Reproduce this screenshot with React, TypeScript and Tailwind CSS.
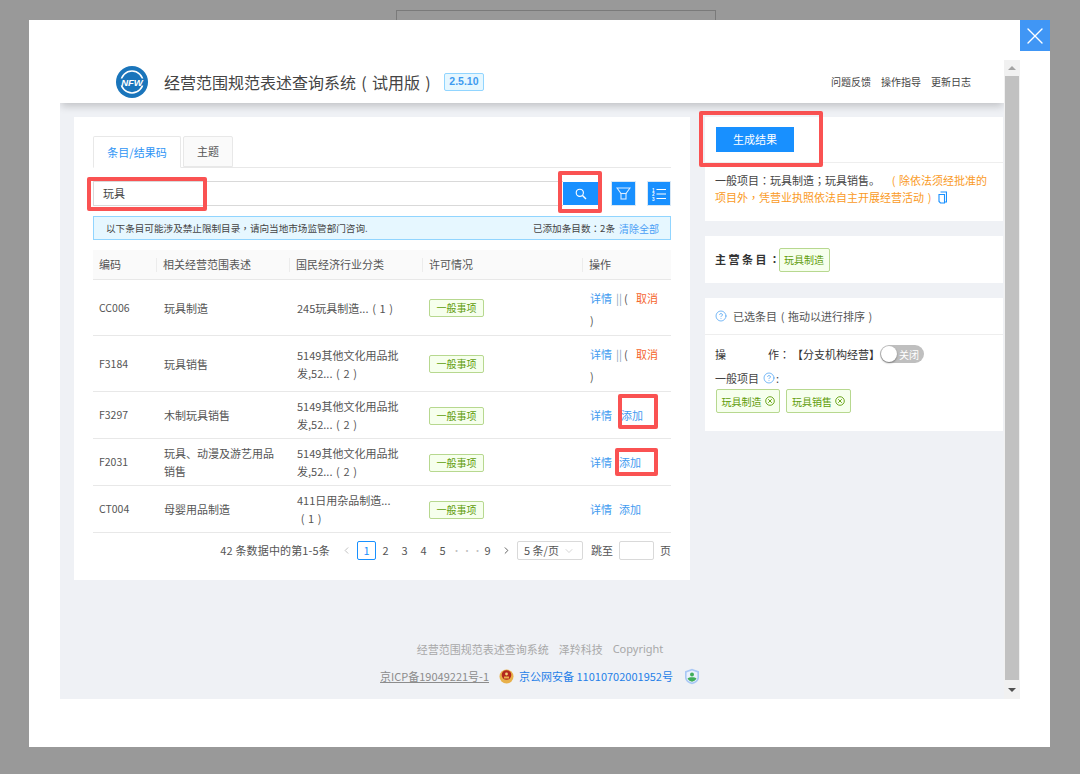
import React from "react";
import { X, CircleHelp, ChevronLeft, ChevronRight, ChevronDown } from "lucide-react";

const FONT = '"Noto Sans CJK SC", "Noto Sans", sans-serif';

/* Full-width punctuation sits centred in its cell in the reference. */
function T({ s }: { s: string }) {
  return (
    <>
      {s.split(/([（）：；，])/).map((part, i) => {
        if (part === "（") return <span key={i} className="px-[0.33em]">(</span>;
        if (part === "）") return <span key={i} className="px-[0.33em]">)</span>;
        if (/^[：；，]$/.test(part)) return <span key={i} className="[font-family:'Noto_Sans_CJK_TC',sans-serif]">{part}</span>;
        return <React.Fragment key={i}>{part}</React.Fragment>;
      })}
    </>
  );
}

type Row = { code: string; name: string[]; cls: string[]; h: string; added: boolean; addGap: string };
const rows: Row[] = [
  { code: "CC006", name: ["玩具制造"], cls: ["245玩具制造...（1）"], h: "h-[56px]", added: true, addGap: "" },
  { code: "F3184", name: ["玩具销售"], cls: ["5149其他文化用品批", "发,52...（2）"], h: "h-[56px]", added: true, addGap: "" },
  { code: "F3297", name: ["木制玩具销售"], cls: ["5149其他文化用品批", "发,52...（2）"], h: "h-[47px]", added: false, addGap: "gap-[9px]" },
  { code: "F2031", name: ["玩具、动漫及游艺用品", "销售"], cls: ["5149其他文化用品批", "发,52...（2）"], h: "h-[47px]", added: false, addGap: "gap-[7px]" },
  { code: "CT004", name: ["母婴用品制造"], cls: ["411日用杂品制造...", "（1）"], h: "h-[47px]", added: false, addGap: "gap-[7px]" },
];

function Tag({ children }: { children: React.ReactNode }) {
  return (
    <span className="inline-flex items-center justify-center h-[18px] w-[55px] border border-[#b7d88f] bg-[#f6ffed] text-[#5f9c0a] text-[10px] rounded-[2px]">
      {children}
    </span>
  );
}

function BoxTag({ children, w }: { children: React.ReactNode; w: string }) {
  return (
    <span className={`inline-flex items-center justify-center gap-[3px] h-[24px] ${w} border border-[#b7d88f] bg-[#f6ffed] text-[#5f9c0a] text-[10px] rounded-[2px]`}>
      {children}
    </span>
  );
}

function Logo() {
  return (
    <svg width="32" height="32" viewBox="0 0 32 32">
      <circle cx="16" cy="16" r="16" fill="#1a75bb" />
      <circle cx="16" cy="16" r="11" fill="#1a75bb" stroke="#ffffff" strokeWidth="1.6" />
      <rect x="3" y="12.5" width="26" height="7" fill="#1a75bb" />
      <text x="16" y="19.500" textAnchor="middle" fontSize="9.500" fontWeight="700" fontStyle="italic" fill="#ffffff" fontFamily="Liberation Sans, sans-serif">NFW</text>
    </svg>
  );
}

function SearchGlyph() {
  return (
    <svg width="12" height="12" viewBox="0 0 12 12" fill="none" stroke="#ffffff" strokeWidth="1.1">
      <circle cx="4.800" cy="4.800" r="3.600" />
      <path d="M7.500 7.500L11 11" strokeWidth="1.400" />
    </svg>
  );
}

function Funnel() {
  return (
    <svg width="15" height="13" viewBox="0 0 15 13" fill="none" stroke="#dcecff" strokeWidth="1.1">
      <path d="M1 1h13l-4 5.500H5z" />
      <rect x="5" y="6.500" width="5" height="5.500" />
    </svg>
  );
}

function ListGlyph() {
  return (
    <svg width="14" height="14" viewBox="0 0 14 14" fill="#ffffff" stroke="none">
      <text x="0" y="4.500" fontSize="4.500" fontWeight="700" fontFamily="Liberation Sans, sans-serif">1</text>
      <text x="0" y="9" fontSize="4.500" fontWeight="700" fontFamily="Liberation Sans, sans-serif">2</text>
      <text x="0" y="13.500" fontSize="4.500" fontWeight="700" fontFamily="Liberation Sans, sans-serif">3</text>
      <rect x="4.500" y="2" width="9.500" height="1" />
      <rect x="4.500" y="6.500" width="9.500" height="1" />
      <rect x="4.500" y="11" width="9.500" height="1" />
    </svg>
  );
}

function CircledX() {
  return (
    <svg width="10" height="10" viewBox="0 0 10 10" fill="none" stroke="currentColor" strokeWidth="0.9">
      <circle cx="5" cy="5" r="4.300" />
      <path d="M3.200 3.200L6.800 6.800M6.800 3.200L3.200 6.800" />
    </svg>
  );
}

function CopyIcon() {
  return (
    <svg width="9" height="13" viewBox="0 0 9 13" fill="none" stroke="#1890ff" strokeWidth="1.1" className="inline align-[-2px] ml-[3px]">
      <path d="M2.500 1H8.500V11H6.500" />
      <path d="M1 3.500H6.500V12H2.500L1 10.500z" />
    </svg>
  );
}

function PoliceBadge() {
  return (
    <svg width="15" height="16" viewBox="0 0 15 16">
      <ellipse cx="7.500" cy="8.500" rx="7" ry="7" fill="#e8b04a" />
      <circle cx="7.500" cy="7" r="4.800" fill="#b3261e" />
      <path d="M5 8.500h5v2H5z" fill="#e8b04a" />
      <circle cx="7.500" cy="6" r="1.400" fill="#f3d27a" />
    </svg>
  );
}

function ShieldIcon() {
  return (
    <svg width="16" height="17" viewBox="0 0 16 17">
      <path d="M8 .8l7 2.400v6c0 3.600-3 6-7 7-4-1-7-3.400-7-7v-6z" fill="#a9c8f5" />
      <path d="M8 2.600l5.400 1.800v4.800c0 2.700-2.300 4.600-5.400 5.400-3.100-.8-5.400-2.700-5.400-5.400V4.400z" fill="#e9f1fc" />
      <circle cx="8" cy="6.500" r="2" fill="#3fae5a" />
      <path d="M3.500 10.500c1.500-1.800 7.500-1.800 9 0-1 1.800-2.800 2.800-4.500 3.300-1.700-.5-3.500-1.500-4.500-3.300z" fill="#3fae5a" />
    </svg>
  );
}

export default function App() {
  return (
    <div className="relative w-[1080px] h-[774px] overflow-hidden bg-[#999999] pt-[10px]" style={{ fontFamily: FONT }}>
      <div className="ml-[396px] w-[320px] h-[12px] border border-[#7a7a7a]" />

      {/* modal */}
      <div className="absolute left-[29px] top-[20px] w-[1021px] h-[727px] bg-white pt-[40px] pl-[31px]">
        <button className="absolute right-0 top-0 w-[30px] h-[31px] bg-[#4096f5] flex items-center justify-center text-white">
          <X size={28} strokeWidth={1.2} />
        </button>

        <div className="flex w-[960px] h-[639px] text-[11px] text-[#555555]">
          <div className="w-[944px] h-full bg-[#eff1f5] flex flex-col overflow-hidden">
            {/* header */}
            <header className="h-[43px] shrink-0 bg-white flex items-center pl-[56px] pr-[33px] shadow-[0_4px_8px_-1px_rgba(0,0,0,0.2)] relative z-10">
              <Logo />
              <h1 className="ml-[16px] text-[16px] leading-[22px] font-normal text-[#444444] whitespace-nowrap"><T s="经营范围规范表述查询系统（试用版）" /></h1>
              <span className="ml-[8px] h-[18px] w-[40px] flex items-center justify-center bg-[#e6f7ff] border border-[#91d5ff] rounded-[2px] text-[#3f9bf0] text-[10.500px] font-bold" style={{ fontFamily: '"Liberation Sans", sans-serif' }}>2.5.10</span>
              <nav className="ml-auto flex gap-[10px] text-[10px] text-[#444444]">
                <span>问题反馈</span>
                <span>操作指导</span>
                <span>更新日志</span>
              </nav>
            </header>

            <main className="flex gap-[15px] pl-[14px] pt-[14px]">
              {/* left */}
              <section className="w-[616px] h-[463px] shrink-0 bg-white px-[19px] pt-[19px]">
                <div className="flex gap-[2px] h-[32px] border-b border-[#e8e8e8]">
                  <div className="w-[88px] h-[32px] bg-white border border-[#e8e8e8] border-b-white rounded-t-[2px] flex items-center justify-center text-[#2f95f5]">条目/结果码</div>
                  <div className="w-[50px] h-[31px] bg-[#fafafa] border border-[#e8e8e8] rounded-t-[2px] flex items-center justify-center">主题</div>
                </div>

                <div className="flex items-center mt-[13px] h-[25px]">
                  <div className="w-[470px] h-[25px] border border-[#d9d9d9] border-r-0 flex items-center pl-[9px] text-[#444444]">玩具</div>
                  <button className="w-[35px] h-[23px] bg-[#1890ff] flex items-center justify-center text-white">
                    <SearchGlyph />
                  </button>
                  <button className="ml-[13px] w-[25px] h-[25px] bg-[#1890ff] border border-[#d9e8f5] flex items-center justify-center">
                    <Funnel />
                  </button>
                  <button className="ml-[11px] w-[24px] h-[25px] bg-[#1890ff] border border-[#d9e8f5] flex items-center justify-center text-white">
                    <ListGlyph />
                  </button>
                </div>

                <div className="mt-[10px] h-[24px] bg-[#e6f7ff] border border-[#91d5ff] flex items-center pl-[12px] pr-[11px] text-[9.600px] text-[#444444]">
                  <span><T s="以下条目可能涉及禁止限制目录，请向当地市场监管部门咨询." /></span>
                  <span className="ml-auto"><T s="已添加条目数：2条" /></span>
                  <span className="ml-[4px] text-[10px] text-[#4a9ef5]">清除全部</span>
                </div>

                {/* table */}
                <div className="mt-[10px] w-[578px]">
                  <div className="grid grid-cols-[63px_133px_133px_160px_89px] h-[30px] bg-[#fafafa] border-b border-[#e8e8e8] items-center">
                    {["编码", "相关经营范围表述", "国民经济行业分类", "许可情况", "操作"].map((t, i) => (
                      <div key={t} className={`pl-[6px] h-[14px] flex items-center ${i > 0 ? "border-l border-[#ececec]" : ""}`}>{t}</div>
                    ))}
                  </div>
                  {rows.map((r) => (
                    <div key={r.code} className={`grid grid-cols-[63px_133px_133px_160px_89px] ${r.h} border-b border-[#e8e8e8] items-center leading-[18px]`}>
                      <div className="pl-[6px] text-[10.500px]">{r.code}</div>
                      <div className="pl-[8px] whitespace-nowrap">
                        {r.name.map((n) => <div key={n}>{n}</div>)}
                      </div>
                      <div className="pl-[8px] whitespace-nowrap">
                        {r.cls.map((n) => <div key={n}><T s={n} /></div>)}
                      </div>
                      <div className="pl-[7px]"><Tag>一般事项</Tag></div>
                      <div className="pl-[8px]">
                        {r.added ? (
                          <div className="leading-[22px] pt-[2px]">
                            <div className="whitespace-nowrap flex items-center">
                              <span className="text-[#3f9bf0]">详情</span>
                              <span className="text-[#8aa4bd] ml-[4px]">||</span>
                              <span className="ml-[2px] w-[12px]">(</span>
                              <span className="text-[#f5642d]">取消</span>
                            </div>
                            <div>)</div>
                          </div>
                        ) : (
                          <div className={`flex ${r.addGap} whitespace-nowrap text-[#3f9bf0]`}>
                            <span>详情</span>
                            <span>添加</span>
                          </div>
                        )}
                      </div>
                    </div>
                  ))}
                </div>

                {/* pagination */}
                <div className="mt-[8px] h-[19px] flex items-center justify-end text-[#555555]">
                  <span className="mr-[11px] tracking-[0.15px]">42 条数据中的第1-5条</span>
                  <ChevronLeft size={11} className="text-[#bbbbbb] mr-[5px]" />
                  <span className="w-[19px] h-[19px] border border-[#1890ff] rounded-[2px] text-[#1890ff] flex items-center justify-center">1</span>
                  {["2", "3", "4", "5"].map((p) => (
                    <span key={p} className="w-[19px] text-center">{p}</span>
                  ))}
                  <span className="w-[26px] text-center text-[#c0c0c0] tracking-[1.500px] text-[9px]">•••</span>
                  <span className="w-[19px] text-center">9</span>
                  <ChevronRight size={11} className="ml-[4px] mr-[3px]" />
                  <span className="ml-[2px] w-[66px] h-[19px] border border-[#d9d9d9] rounded-[2px] flex items-center pl-[6px] gap-[4px]">
                    5 条/页
                    <ChevronDown size={12} className="text-[#bbbbbb]" strokeWidth={1.2} />
                  </span>
                  <span className="ml-[8px]">跳至</span>
                  <span className="ml-[6px] w-[35px] h-[19px] border border-[#d9d9d9] rounded-[2px]" />
                  <span className="ml-[6px]">页</span>
                </div>
              </section>

              {/* right */}
              <aside className="w-[298px] flex flex-col gap-[15px]">
                <div className="h-[104px] bg-white">
                  <div className="h-[46px] pl-[11px] pt-[10px] border-b border-[#eeeeee]">
                    <button className="w-[78px] h-[25px] bg-[#1890ff] text-white text-[11px]">生成结果</button>
                  </div>
                  <div className="pl-[10px] pt-[9px] leading-[17px] text-[#444444] whitespace-nowrap">
                    <T s="一般项目：玩具制造；玩具销售。" />
                    <span className="text-[#fa9a1e] ml-[8px]"><T s="（除依法须经批准的" /></span>
                    <br />
                    <span className="text-[#fa9a1e]"><T s="项目外，凭营业执照依法自主开展经营活动）" /></span>
                    <CopyIcon />
                  </div>
                </div>

                <div className="h-[47px] bg-white flex items-center pl-[10px] text-[#333333]">
                  <span className="font-bold tracking-[2.500px] text-[11px] -mr-[4px]"><T s="主营条目：" /></span>
                  <span className="w-[51px] h-[24px] flex items-center justify-center border border-[#b7d88f] bg-[#f6ffed] text-[#5f9c0a] text-[10px] rounded-[2px]">玩具制造</span>
                </div>

                <div className="h-[133px] bg-white">
                  <div className="h-[37px] border-b border-[#eeeeee] flex items-center pl-[10px] gap-[6px]">
                    <CircleHelp size={12} className="text-[#3f9bf0]" strokeWidth={1.4} />
                    <span><T s="已选条目（拖动以进行排序）" /></span>
                  </div>
                  <div className="pl-[10px] pt-[10px]">
                    <div className="flex items-center h-[18px] text-[#333333] whitespace-nowrap">
                      <span className="w-[53px]">操</span>
                      <span><T s="作：" /></span>
                      <span className="ml-[2px]">【分支机构经营】</span>
                      <span className="relative w-[44px] h-[18px] rounded-full bg-[#bfbfbf] text-white text-[10px] flex items-center justify-end pr-[5px]">
                        关闭
                        <span className="absolute left-[1px] top-[1px] w-[16px] h-[16px] rounded-full bg-white shadow-[0_1px_2px_rgba(0,0,0,0.4)]" />
                      </span>
                    </div>
                    <div className="flex items-center mt-[7px] h-[16px] text-[#444444]">
                      一般项目
                      <CircleHelp size={12} className="text-[#3f9bf0] ml-[4px] mr-[1px]" strokeWidth={1.4} />
                      :
                    </div>
                    <div className="flex gap-[6px] mt-[3px] ml-[1px]">
                      <BoxTag w="w-[64px]">玩具制造<CircledX /></BoxTag>
                      <BoxTag w="w-[65px]">玩具销售<CircledX /></BoxTag>
                    </div>
                  </div>
                </div>
              </aside>
            </main>

            {/* footer */}
            <footer className="mt-auto h-[60px] pl-[16px] text-center text-[#a8a8a8] text-[11px]">
              <div className="flex justify-center gap-[10px] h-[20px] items-center">
                <span>经营范围规范表述查询系统</span>
                <span>泽羚科技</span>
                <span style={{ fontFamily: '"Noto Sans", sans-serif' }}>Copyright</span>
              </div>
              <div className="flex justify-center items-center mt-[8px] h-[18px]">
                <span className="underline text-[#8c8c8c]">京ICP备19049221号-1</span>
                <span className="ml-[10px]"><PoliceBadge /></span>
                <span className="ml-[5px] text-[#1f7fe8]">京公网安备 11010702001952号</span>
                <span className="ml-[11px]"><ShieldIcon /></span>
              </div>
            </footer>
          </div>

          {/* scrollbar */}
          <div className="w-[16px] h-full bg-[#f1f1f1] flex flex-col items-center">
            <div className="h-[16px] flex items-center justify-center">
              <div className="w-0 h-0 border-x-[4px] border-x-transparent border-b-[4px] border-b-[#a3a3a3]" />
            </div>
            <div className="w-[14px] h-[604px] bg-[#c1c1c1]" />
            <div className="mt-auto h-[19px] flex items-center justify-center">
              <div className="w-0 h-0 border-x-[4px] border-x-transparent border-t-[4px] border-t-[#505050]" />
            </div>
          </div>
        </div>
      </div>

      {/* red annotation frames */}
      <div className="absolute left-[87px] top-[177px] w-[120px] h-[34px] border-[4px] border-[#fa5252] rounded-[2px]" />
      <div className="absolute left-[558px] top-[171px] w-[44px] h-[42px] border-[4px] border-[#fa5252] rounded-[2px]" />
      <div className="absolute left-[699px] top-[111px] w-[124px] h-[56px] border-[4px] border-[#fa5252] rounded-[2px]" />
      <div className="absolute left-[618px] top-[394px] w-[40px] h-[35px] border-[4px] border-[#fa5252] rounded-[2px]" />
      <div className="absolute left-[615px] top-[448px] w-[43px] h-[28px] border-[4px] border-[#fa5252] rounded-[2px]" />
    </div>
  );
}
